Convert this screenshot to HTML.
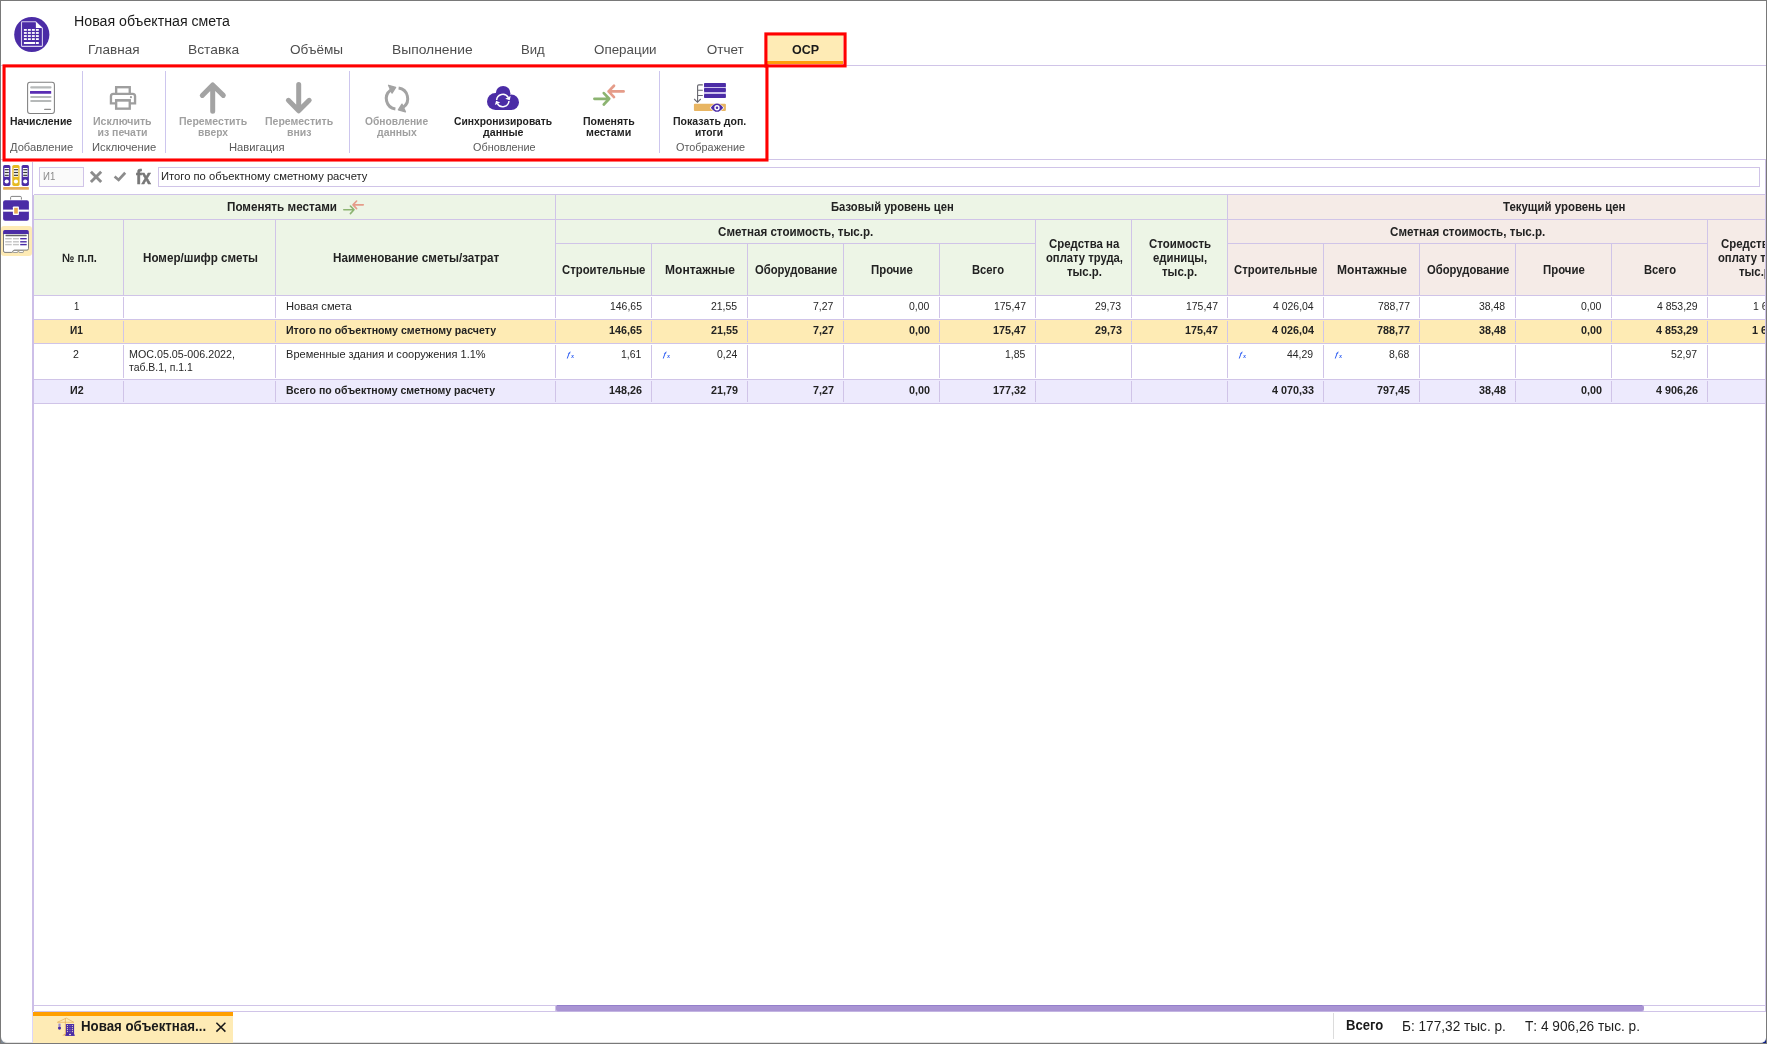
<!DOCTYPE html><html lang="ru"><head><meta charset="utf-8"><title>Новая объектная смета</title><style>

html,body{margin:0;padding:0;}
body{width:1767px;height:1044px;position:relative;overflow:hidden;background:#fff;font-family:"Liberation Sans", sans-serif;}
.t{position:absolute;white-space:nowrap;transform-origin:0 0;}
.a{position:absolute;}
svg{position:absolute;overflow:visible;}

</style></head><body>
<div class="a" style="left:0px;top:0px;width:1767px;height:1044px;background:#797979;"></div>
<div class="a" style="left:1759px;top:1036px;width:7px;height:7px;background:#0b1f86;"></div>
<div class="a" style="left:1px;top:1036px;width:6px;height:7px;background:#7d8894;"></div>
<div class="a" style="left:1px;top:1px;width:1765px;height:1042px;background:#fff;border-radius:0 0 5px 6px;box-sizing:border-box;border-bottom:1px solid #e2e2e2;"></div>
<div class="a" style="left:1px;top:65px;width:1765px;height:1px;background:#d0c4e8;"></div>
<div class="a" style="left:1px;top:159px;width:1765px;height:1px;background:#d0c4e8;"></div>
<div class="a" style="left:32px;top:162px;width:1px;height:850px;background:#cdbfe8;"></div>
<div class="a" style="left:33px;top:195px;width:1px;height:816px;background:#cdbfe8;"></div>
<div class="a" style="left:32px;top:1012px;width:1px;height:30px;background:#dcd6fb;"></div>
<div class="a" style="left:1765px;top:160px;width:1px;height:852px;background:#d0c4e8;"></div>
<div class="a" style="left:34px;top:195px;width:1193px;height:100px;background:#edf5e6;"></div>
<div class="a" style="left:1228px;top:195px;width:537px;height:100px;background:#f5ebe7;"></div>
<div class="a" style="left:34px;top:320px;width:1731px;height:23px;background:#feebb4;"></div>
<div class="a" style="left:34px;top:380px;width:1731px;height:23px;background:#edeafd;"></div>
<div class="a" style="left:34px;top:194px;width:1731px;height:1px;background:#d0c4e8;"></div>
<div class="a" style="left:34px;top:295px;width:1731px;height:1px;background:#d0c4e8;"></div>
<div class="a" style="left:34px;top:319px;width:1731px;height:1px;background:#d0c4e8;"></div>
<div class="a" style="left:34px;top:343px;width:1731px;height:1px;background:#d0c4e8;"></div>
<div class="a" style="left:34px;top:379px;width:1731px;height:1px;background:#d0c4e8;"></div>
<div class="a" style="left:34px;top:403px;width:1731px;height:1px;background:#d0c4e8;"></div>
<div class="a" style="left:34px;top:219px;width:1731px;height:1px;background:#d0c4e8;"></div>
<div class="a" style="left:555px;top:243px;width:480px;height:1px;background:#d0c4e8;"></div>
<div class="a" style="left:1227px;top:243px;width:480px;height:1px;background:#d0c4e8;"></div>
<div class="a" style="left:123px;top:219px;width:1px;height:76px;background:#d0c4e8;"></div>
<div class="a" style="left:275px;top:219px;width:1px;height:76px;background:#d0c4e8;"></div>
<div class="a" style="left:555px;top:194px;width:1px;height:101px;background:#d0c4e8;"></div>
<div class="a" style="left:1227px;top:194px;width:1px;height:101px;background:#d0c4e8;"></div>
<div class="a" style="left:651px;top:243px;width:1px;height:52px;background:#d0c4e8;"></div>
<div class="a" style="left:747px;top:243px;width:1px;height:52px;background:#d0c4e8;"></div>
<div class="a" style="left:843px;top:243px;width:1px;height:52px;background:#d0c4e8;"></div>
<div class="a" style="left:939px;top:243px;width:1px;height:52px;background:#d0c4e8;"></div>
<div class="a" style="left:1323px;top:243px;width:1px;height:52px;background:#d0c4e8;"></div>
<div class="a" style="left:1419px;top:243px;width:1px;height:52px;background:#d0c4e8;"></div>
<div class="a" style="left:1515px;top:243px;width:1px;height:52px;background:#d0c4e8;"></div>
<div class="a" style="left:1611px;top:243px;width:1px;height:52px;background:#d0c4e8;"></div>
<div class="a" style="left:1035px;top:219px;width:1px;height:76px;background:#d0c4e8;"></div>
<div class="a" style="left:1131px;top:219px;width:1px;height:76px;background:#d0c4e8;"></div>
<div class="a" style="left:1707px;top:219px;width:1px;height:76px;background:#d0c4e8;"></div>
<div class="a" style="left:123px;top:297px;width:1px;height:21px;background:#d0c4e8;"></div>
<div class="a" style="left:275px;top:297px;width:1px;height:21px;background:#d0c4e8;"></div>
<div class="a" style="left:555px;top:297px;width:1px;height:21px;background:#d0c4e8;"></div>
<div class="a" style="left:651px;top:297px;width:1px;height:21px;background:#d0c4e8;"></div>
<div class="a" style="left:747px;top:297px;width:1px;height:21px;background:#d0c4e8;"></div>
<div class="a" style="left:843px;top:297px;width:1px;height:21px;background:#d0c4e8;"></div>
<div class="a" style="left:939px;top:297px;width:1px;height:21px;background:#d0c4e8;"></div>
<div class="a" style="left:1035px;top:297px;width:1px;height:21px;background:#d0c4e8;"></div>
<div class="a" style="left:1131px;top:297px;width:1px;height:21px;background:#d0c4e8;"></div>
<div class="a" style="left:1227px;top:297px;width:1px;height:21px;background:#d0c4e8;"></div>
<div class="a" style="left:1323px;top:297px;width:1px;height:21px;background:#d0c4e8;"></div>
<div class="a" style="left:1419px;top:297px;width:1px;height:21px;background:#d0c4e8;"></div>
<div class="a" style="left:1515px;top:297px;width:1px;height:21px;background:#d0c4e8;"></div>
<div class="a" style="left:1611px;top:297px;width:1px;height:21px;background:#d0c4e8;"></div>
<div class="a" style="left:1707px;top:297px;width:1px;height:21px;background:#d0c4e8;"></div>
<div class="a" style="left:123px;top:321px;width:1px;height:21px;background:#d0c4e8;"></div>
<div class="a" style="left:275px;top:321px;width:1px;height:21px;background:#d0c4e8;"></div>
<div class="a" style="left:555px;top:321px;width:1px;height:21px;background:#d0c4e8;"></div>
<div class="a" style="left:651px;top:321px;width:1px;height:21px;background:#d0c4e8;"></div>
<div class="a" style="left:747px;top:321px;width:1px;height:21px;background:#d0c4e8;"></div>
<div class="a" style="left:843px;top:321px;width:1px;height:21px;background:#d0c4e8;"></div>
<div class="a" style="left:939px;top:321px;width:1px;height:21px;background:#d0c4e8;"></div>
<div class="a" style="left:1035px;top:321px;width:1px;height:21px;background:#d0c4e8;"></div>
<div class="a" style="left:1131px;top:321px;width:1px;height:21px;background:#d0c4e8;"></div>
<div class="a" style="left:1227px;top:321px;width:1px;height:21px;background:#d0c4e8;"></div>
<div class="a" style="left:1323px;top:321px;width:1px;height:21px;background:#d0c4e8;"></div>
<div class="a" style="left:1419px;top:321px;width:1px;height:21px;background:#d0c4e8;"></div>
<div class="a" style="left:1515px;top:321px;width:1px;height:21px;background:#d0c4e8;"></div>
<div class="a" style="left:1611px;top:321px;width:1px;height:21px;background:#d0c4e8;"></div>
<div class="a" style="left:1707px;top:321px;width:1px;height:21px;background:#d0c4e8;"></div>
<div class="a" style="left:123px;top:345px;width:1px;height:33px;background:#d0c4e8;"></div>
<div class="a" style="left:275px;top:345px;width:1px;height:33px;background:#d0c4e8;"></div>
<div class="a" style="left:555px;top:345px;width:1px;height:33px;background:#d0c4e8;"></div>
<div class="a" style="left:651px;top:345px;width:1px;height:33px;background:#d0c4e8;"></div>
<div class="a" style="left:747px;top:345px;width:1px;height:33px;background:#d0c4e8;"></div>
<div class="a" style="left:843px;top:345px;width:1px;height:33px;background:#d0c4e8;"></div>
<div class="a" style="left:939px;top:345px;width:1px;height:33px;background:#d0c4e8;"></div>
<div class="a" style="left:1035px;top:345px;width:1px;height:33px;background:#d0c4e8;"></div>
<div class="a" style="left:1131px;top:345px;width:1px;height:33px;background:#d0c4e8;"></div>
<div class="a" style="left:1227px;top:345px;width:1px;height:33px;background:#d0c4e8;"></div>
<div class="a" style="left:1323px;top:345px;width:1px;height:33px;background:#d0c4e8;"></div>
<div class="a" style="left:1419px;top:345px;width:1px;height:33px;background:#d0c4e8;"></div>
<div class="a" style="left:1515px;top:345px;width:1px;height:33px;background:#d0c4e8;"></div>
<div class="a" style="left:1611px;top:345px;width:1px;height:33px;background:#d0c4e8;"></div>
<div class="a" style="left:1707px;top:345px;width:1px;height:33px;background:#d0c4e8;"></div>
<div class="a" style="left:123px;top:381px;width:1px;height:21px;background:#d0c4e8;"></div>
<div class="a" style="left:275px;top:381px;width:1px;height:21px;background:#d0c4e8;"></div>
<div class="a" style="left:555px;top:381px;width:1px;height:21px;background:#d0c4e8;"></div>
<div class="a" style="left:651px;top:381px;width:1px;height:21px;background:#d0c4e8;"></div>
<div class="a" style="left:747px;top:381px;width:1px;height:21px;background:#d0c4e8;"></div>
<div class="a" style="left:843px;top:381px;width:1px;height:21px;background:#d0c4e8;"></div>
<div class="a" style="left:939px;top:381px;width:1px;height:21px;background:#d0c4e8;"></div>
<div class="a" style="left:1035px;top:381px;width:1px;height:21px;background:#d0c4e8;"></div>
<div class="a" style="left:1131px;top:381px;width:1px;height:21px;background:#d0c4e8;"></div>
<div class="a" style="left:1227px;top:381px;width:1px;height:21px;background:#d0c4e8;"></div>
<div class="a" style="left:1323px;top:381px;width:1px;height:21px;background:#d0c4e8;"></div>
<div class="a" style="left:1419px;top:381px;width:1px;height:21px;background:#d0c4e8;"></div>
<div class="a" style="left:1515px;top:381px;width:1px;height:21px;background:#d0c4e8;"></div>
<div class="a" style="left:1611px;top:381px;width:1px;height:21px;background:#d0c4e8;"></div>
<div class="a" style="left:1707px;top:381px;width:1px;height:21px;background:#d0c4e8;"></div>
<div class="a" style="left:34px;top:1005px;width:1731px;height:1px;background:#d0c4e8;"></div>
<div class="a" style="left:34px;top:1011px;width:1731px;height:1px;background:#d0c4e8;"></div>
<div class="a" style="left:555px;top:1005px;width:1px;height:7px;background:#d0c4e8;"></div>
<div class="a" style="left:556px;top:1005px;width:1088px;height:7px;background:#c3b4e2;border-radius:2px 3px 3px 2px;"></div>
<div class="a" style="left:556px;top:1005px;width:1088px;height:6px;background:#a994d3;border-radius:2px 3px 3px 2px;"></div>
<div class="a" style="left:557px;top:1005px;width:1085px;height:1px;background:#947fcb;"></div>
<div class="a" style="left:33px;top:1012px;width:200px;height:31px;background:#feebb5;"></div>
<div class="a" style="left:33px;top:1012px;width:200px;height:4px;background:#ff9f00;"></div>
<div class="a" style="left:1333px;top:1013px;width:1px;height:26px;background:#dcdcdc;"></div>
<div class="a" style="left:39px;top:167px;width:45px;height:20px;background:#fafafa;box-sizing:border-box;border:1px solid #d0c4e8;"></div>
<div class="a" style="left:158px;top:167px;width:1602px;height:20px;background:#fff;box-sizing:border-box;border:1px solid #d0c4e8;"></div>
<div class="a" style="left:767px;top:35px;width:76px;height:26px;background:#feebb5;"></div>
<div class="a" style="left:767px;top:61px;width:76px;height:3px;background:#ff9c0a;"></div>
<svg style="left:0;top:0" width="900" height="170" viewBox="0 0 900 170"><rect x="4.05" y="65.9" width="762.9" height="94.1" fill="none" stroke="#ff0000" stroke-width="3.1"/><rect x="765.9" y="33.95" width="79.15" height="31.95" fill="none" stroke="#ff0000" stroke-width="3.1"/></svg>
<div class="a" style="left:82px;top:71px;width:1px;height:82px;background:#cdc6ee;"></div>
<div class="a" style="left:165px;top:71px;width:1px;height:82px;background:#cdc6ee;"></div>
<div class="a" style="left:349px;top:71px;width:1px;height:82px;background:#cdc6ee;"></div>
<div class="a" style="left:659px;top:71px;width:1px;height:82px;background:#cdc6ee;"></div>
<div class="a" style="left:1px;top:226px;width:31px;height:30px;background:#feebb5;border-radius:3px;"></div>
<svg style="left:10px;top:14px" width="44" height="42" viewBox="10 14 44 42"><circle cx="31.8" cy="34.5" r="17.6" fill="#4b2ca6"/><path d="M22.3 21.7 H35.6 L42.4 28.3 V45.6 Q42.4 46.4 41.6 46.4 H22.3 Q21.5 46.4 21.5 45.6 V22.5 Q21.5 21.7 22.3 21.7 Z" fill="#4b2ca6" stroke="#d9d0f0" stroke-width="1.1"/><path d="M35.9 21.9 V27.9 H42.2 Z" fill="#fff"/><rect x="23.90" y="29.00" width="2.9" height="1.8" fill="#fff"/><rect x="27.90" y="29.00" width="2.9" height="1.8" fill="#fff"/><rect x="31.90" y="29.00" width="2.9" height="1.8" fill="#fff"/><rect x="35.90" y="29.00" width="2.9" height="1.8" fill="#fff"/><rect x="23.90" y="32.07" width="2.9" height="1.8" fill="#fff"/><rect x="27.90" y="32.07" width="2.9" height="1.8" fill="#fff"/><rect x="31.90" y="32.07" width="2.9" height="1.8" fill="#fff"/><rect x="35.90" y="32.07" width="2.9" height="1.8" fill="#fff"/><rect x="23.90" y="35.14" width="2.9" height="1.8" fill="#fff"/><rect x="27.90" y="35.14" width="2.9" height="1.8" fill="#fff"/><rect x="31.90" y="35.14" width="2.9" height="1.8" fill="#fff"/><rect x="35.90" y="35.14" width="2.9" height="1.8" fill="#fff"/><rect x="23.90" y="38.21" width="2.9" height="1.8" fill="#fff"/><rect x="27.90" y="38.21" width="2.9" height="1.8" fill="#fff"/><rect x="31.90" y="38.21" width="2.9" height="1.8" fill="#fff"/><rect x="35.90" y="38.21" width="2.9" height="1.8" fill="#fff"/><rect x="23.9" y="42" width="11.2" height="2" fill="#fff"/><rect x="35.9" y="42" width="2.9" height="2" fill="#fff"/></svg>
<svg style="left:26px;top:81px" width="31" height="34" viewBox="26 81 31 34"><rect x="27.6" y="82.3" width="26.8" height="31.2" rx="2.4" fill="#fff" stroke="#808080" stroke-width="1.05"/><rect x="30.2" y="86.3" width="21.3" height="2.1" rx="1" fill="#b6b9b9"/><rect x="30.0" y="90.95" width="21.2" height="2.9" rx="0.4" fill="#5a2db3"/><rect x="30.2" y="96.0" width="21.3" height="2.1" rx="1" fill="#b6b9b9"/><rect x="30.2" y="100.0" width="21.3" height="2.1" rx="1" fill="#b6b9b9"/><rect x="44.1" y="108.65" width="6.9" height="1.35" rx="0.5" fill="#8c8c8c"/></svg>
<svg style="left:108px;top:84px" width="30" height="28" viewBox="108 84 30 28"><rect x="116.15" y="87.2" width="13.6" height="7" fill="none" stroke="#9e9e9e" stroke-width="2.35"/><path d="M110.95 103.3 V96.3 Q110.95 93.85 113.4 93.85 H132.6 Q135.05 93.85 135.05 96.3 V103.3 Z" fill="#fff" stroke="#9e9e9e" stroke-width="2.35"/><rect x="116.15" y="100.5" width="13.6" height="8.15" fill="#fff" stroke="#9e9e9e" stroke-width="2.35"/><rect x="114.97" y="99.1" width="15.96" height="1.6" fill="#9e9e9e"/><circle cx="130.95" cy="97.15" r="1.1" fill="#9e9e9e"/></svg>
<svg style="left:198px;top:80px" width="30" height="36" viewBox="198 80 30 36"><path d="M212.7 111.3 V85.4 M202.3 95.4 L212.7 85 L223.3 95.4" fill="none" stroke="#a3a3a3" stroke-width="5" stroke-linecap="round" stroke-linejoin="round"/></svg>
<svg style="left:284px;top:80px" width="30" height="36" viewBox="284 80 30 36"><path d="M298.7 84.5 V110.4 M288.4 100.3 L298.7 110.8 L309.2 100.3" fill="none" stroke="#a3a3a3" stroke-width="5" stroke-linecap="round" stroke-linejoin="round"/></svg>
<svg style="left:383px;top:83px" width="28" height="32" viewBox="383 83 28 32"><path d="M395.4 109.1 A10.6 10.6 0 0 1 390.6 90.1" fill="none" stroke="#a3a3a3" stroke-width="3.0"/><path d="M388.6 85.3 L395.6 87.4 L392.0 93.0 Z" fill="#a3a3a3" stroke="#a3a3a3" stroke-width="1.4" stroke-linejoin="round"/><path d="M398.6 88.1 A10.6 10.6 0 0 1 403.4 107.1" fill="none" stroke="#a3a3a3" stroke-width="3.0"/><path d="M405.4 111.9 L398.4 109.8 L402.0 104.2 Z" fill="#a3a3a3" stroke="#a3a3a3" stroke-width="1.4" stroke-linejoin="round"/></svg>
<svg style="left:485px;top:84px" width="36" height="28" viewBox="485 84 36 28"><circle cx="495.5" cy="101.5" r="8.5" fill="#4b2ca6"/><circle cx="503.1" cy="93.2" r="7.3" fill="#4b2ca6"/><circle cx="511.2" cy="102.2" r="7.8" fill="#4b2ca6"/><rect x="495.5" y="98" width="15.7" height="12" fill="#4b2ca6"/><path d="M496.62 100.0 A6.2 6.2 0 0 1 508.2 97.4" fill="none" stroke="#fff" stroke-width="1.5"/><path d="M505.3 98.7 L510.7 96.0 L509.7 100.3 Z" fill="#fff"/><path d="M508.98 101.04 A6.2 6.2 0 0 1 497.4 103.6" fill="none" stroke="#fff" stroke-width="1.5"/><path d="M500.2 102.5 L494.9 104.9 L496.1 100.8 Z" fill="#fff"/></svg>
<svg style="left:590px;top:82px" width="38" height="26" viewBox="590 82 38 26"><path d="M594.4 98.8 H609.2 M603.80 93.10 L609.20 98.8 L603.80 104.50" fill="none" stroke="#8cb471" stroke-width="2.7" stroke-linecap="round" stroke-linejoin="round"/><path d="M623.6 91.4 H608.6 M614.00 85.70 L608.60 91.4 L614.00 97.10" fill="none" stroke="#e59c89" stroke-width="2.7" stroke-linecap="round" stroke-linejoin="round"/></svg>
<svg style="left:342px;top:199px" width="24" height="17" viewBox="342 199 24 17"><path d="M343.8 209.8 H354.0 M350.40 206.00 L354.00 209.8 L350.40 213.60" fill="none" stroke="#8cb471" stroke-width="1.6" stroke-linecap="round" stroke-linejoin="round"/><path d="M363.3 204.85 H353.0 M356.60 201.05 L353.00 204.85 L356.60 208.65" fill="none" stroke="#e59c89" stroke-width="1.6" stroke-linecap="round" stroke-linejoin="round"/></svg>
<svg style="left:692px;top:82px" width="36" height="32" viewBox="692 82 36 32"><rect x="704" y="83" width="21.9" height="15" rx="0.9" fill="#cdc2ec"/><rect x="704" y="83" width="21.9" height="4.1" rx="0.9" fill="#4b2ca6"/><rect x="704" y="88.05" width="21.9" height="3.9" rx="0.9" fill="#4b2ca6"/><rect x="704" y="93.9" width="21.9" height="4.1" rx="0.9" fill="#4b2ca6"/><rect x="693.9" y="103.8" width="32" height="7.2" rx="1" fill="#e8b562"/><path d="M702.8 84.9 H698.8 Q697.6 84.9 697.6 86.1 V102 M697.6 90.2 H702.8 M697.6 95.5 H702.8 M694.2 99.0 L697.5 102.3 L700.7 99.0" fill="none" stroke="#66666e" stroke-width="1.1"/><path d="M709.8 107.7 Q717 98.6 724.2 107.7 Q717 116.8 709.8 107.7 Z" fill="#fff"/><path d="M710.8 107.7 Q717 99.4 723.2 107.7 Q717 116 710.8 107.7 Z" fill="#4b2ca6"/><circle cx="717" cy="107.7" r="2.7" fill="#fff"/><circle cx="717" cy="107.7" r="1.25" fill="#4b2ca6"/></svg>
<svg style="left:88px;top:168px" width="40" height="18" viewBox="88 168 40 18"><path d="M90.9 171.8 L101.2 182.0 M101.2 171.8 L90.9 182.0" fill="none" stroke="#8c8c8c" stroke-width="2.9"/><path d="M114.6 176.55 L118.6 179.95 L125.2 172.75" fill="none" stroke="#8c8c8c" stroke-width="2.7"/></svg>
<svg style="left:2px;top:164px" width="28" height="27" viewBox="2 164 28 27"><rect x="3.1" y="164.9" width="7.3" height="21" rx="1.6" fill="#4b2ca6"/><rect x="4.4" y="168" width="4.7" height="8.8" fill="#fff"/><rect x="4.7" y="169.1" width="4.1" height="1.2" fill="#3a3a3a"/><rect x="4.7" y="171.9" width="4.1" height="1.2" fill="#3a3a3a"/><rect x="4.7" y="174.7" width="4.1" height="1.2" fill="#3a3a3a"/><circle cx="6.75" cy="181.5" r="2.1" fill="#fff"/><rect x="12.3" y="164.9" width="7.3" height="21" rx="1.6" fill="#e6ba22"/><rect x="13.600000000000001" y="168" width="4.7" height="8.8" fill="#fff"/><rect x="13.9" y="169.1" width="4.1" height="1.2" fill="#3a3a3a"/><rect x="13.9" y="171.9" width="4.1" height="1.2" fill="#3a3a3a"/><rect x="13.9" y="174.7" width="4.1" height="1.2" fill="#3a3a3a"/><circle cx="15.950000000000001" cy="181.5" r="2.1" fill="#fff"/><rect x="21.6" y="164.9" width="7.3" height="21" rx="1.6" fill="#4b2ca6"/><rect x="22.900000000000002" y="168" width="4.7" height="8.8" fill="#fff"/><rect x="23.200000000000003" y="169.1" width="4.1" height="1.2" fill="#3a3a3a"/><rect x="23.200000000000003" y="171.9" width="4.1" height="1.2" fill="#3a3a3a"/><rect x="23.200000000000003" y="174.7" width="4.1" height="1.2" fill="#3a3a3a"/><circle cx="25.25" cy="181.5" r="2.1" fill="#fff"/><rect x="3.1" y="187" width="25.8" height="2.8" rx="0.6" fill="#e6ae58"/></svg>
<svg style="left:2px;top:195px" width="28" height="27" viewBox="2 195 28 27"><path d="M10.6 199.6 V197.6 Q10.6 196.4 11.8 196.4 H20.2 Q21.4 196.4 21.4 197.6 V199.6" fill="none" stroke="#7c7c7c" stroke-width="0.95"/><rect x="3.1" y="200.2" width="25.8" height="20.6" rx="2" fill="#4b2ca6"/><rect x="3.1" y="209.6" width="25.8" height="2.1" fill="#fff"/><rect x="12.9" y="206.4" width="6" height="8.6" rx="0.8" fill="#fff"/><rect x="14.2" y="207.8" width="3.6" height="5.8" fill="#e8aa50"/></svg>
<svg style="left:2px;top:229px" width="28" height="25" viewBox="2 229 28 25"><path d="M3.5 233.6 V250.9 Q3.5 252.4 5 252.4 H11.8 Q12.6 252.4 12.9 251.5 Q13.2 250.1 14.5 250.1 H27 Q28.5 250.1 28.5 248.6 V233.6 Z" fill="#fff" stroke="#6e6e6e" stroke-width="0.9"/><rect x="13" y="250.5" width="4.9" height="2" rx="0.6" fill="#fff" stroke="#7a7a7a" stroke-width="0.7"/><rect x="18.9" y="250.5" width="4.5" height="2" rx="0.6" fill="#fff" stroke="#7a7a7a" stroke-width="0.7"/><path d="M3.1 233.9 V231.7 Q3.1 230.1 4.7 230.1 H27.2 Q28.8 230.1 28.8 231.7 V233.9 Z" fill="#4b2ca6"/><rect x="5.5" y="234.85" width="21.2" height="1.3" rx="0.5" fill="#666"/><rect x="5.2" y="238.0" width="6.5" height="1.4" fill="#c4c4c4"/><rect x="13" y="238.0" width="5.9" height="1.4" fill="#c4c4c4"/><rect x="20.2" y="238.0" width="6.5" height="1.4" fill="#4b2ca6"/><rect x="5.2" y="241.1" width="6.5" height="1.4" fill="#c4c4c4"/><rect x="13" y="241.1" width="5.9" height="1.4" fill="#c4c4c4"/><rect x="20.2" y="241.1" width="6.5" height="1.4" fill="#4b2ca6"/><rect x="5.2" y="243.9" width="6.5" height="1.4" fill="#c4c4c4"/><rect x="13" y="243.9" width="5.9" height="1.4" fill="#c4c4c4"/><rect x="20.2" y="243.9" width="6.5" height="1.4" fill="#4b2ca6"/></svg>
<svg style="left:56px;top:1016px" width="22" height="22" viewBox="56 1016 22 22"><path d="M65.4 1035.6 V1018.4 M57.2 1022.3 H74 M57.6 1022.2 L66.3 1018.1 L73.6 1022.2" fill="none" stroke="#e6b05a" stroke-width="0.9" stroke-opacity="0.8"/><path d="M62.2 1035.4 L65.2 1033.4 V1035.4 Z" fill="#e6b05a"/><rect x="65.9" y="1023.9" width="8.2" height="11.8" rx="0.5" fill="#4b2ca6"/><rect x="65.1" y="1034.5" width="9.8" height="1.3" rx="0.5" fill="#4b2ca6"/><circle cx="67.5" cy="1025.50" r="0.62" fill="#f3e2c2" opacity="1"/><circle cx="70" cy="1025.50" r="0.62" fill="#f3e2c2" opacity="0.45"/><circle cx="72.4" cy="1025.50" r="0.62" fill="#f3e2c2" opacity="1"/><circle cx="67.5" cy="1027.53" r="0.62" fill="#f3e2c2" opacity="1"/><circle cx="70" cy="1027.53" r="0.62" fill="#f3e2c2" opacity="0.45"/><circle cx="72.4" cy="1027.53" r="0.62" fill="#f3e2c2" opacity="1"/><circle cx="67.5" cy="1029.56" r="0.62" fill="#f3e2c2" opacity="1"/><circle cx="70" cy="1029.56" r="0.62" fill="#f3e2c2" opacity="0.45"/><circle cx="72.4" cy="1029.56" r="0.62" fill="#f3e2c2" opacity="1"/><circle cx="67.5" cy="1031.59" r="0.62" fill="#f3e2c2" opacity="1"/><circle cx="70" cy="1031.59" r="0.62" fill="#f3e2c2" opacity="0.45"/><circle cx="72.4" cy="1031.59" r="0.62" fill="#f3e2c2" opacity="1"/><ellipse cx="70" cy="1034.6" rx="1" ry="0.75" fill="#fdf3c8"/><path d="M59.5 1023.6 V1026.6" stroke="#9d8ccf" stroke-width="2.2"/><circle cx="59.5" cy="1028.1" r="1.55" fill="#4b2ca6"/></svg>
<svg style="left:214px;top:1020px" width="14" height="14" viewBox="214 1020 14 14"><path d="M216.4 1022.8 L225.4 1031.6 M225.4 1022.8 L216.4 1031.6" stroke="#1a1a1a" stroke-width="1.5" fill="none"/></svg>
<div class="a" style="left:0;top:0;width:1765px;height:1044px;overflow:hidden;will-change:transform">
<span class="t" style="left:74.30px;top:14.00px;font-size:14px;line-height:14px;color:#1a1a1a;transform:scaleX(1.0131);">Новая объектная смета</span>
<span class="t" style="left:88.30px;top:43.00px;font-size:13.5px;line-height:13.5px;color:#4d4d4d;transform:scaleX(1.0021);">Главная</span>
<span class="t" style="left:188.30px;top:43.00px;font-size:13.5px;line-height:13.5px;color:#4d4d4d;transform:scaleX(1.0222);">Вставка</span>
<span class="t" style="left:289.70px;top:43.00px;font-size:13.5px;line-height:13.5px;color:#4d4d4d;transform:scaleX(1.0072);">Объёмы</span>
<span class="t" style="left:391.50px;top:43.00px;font-size:13.5px;line-height:13.5px;color:#4d4d4d;transform:scaleX(1.0257);">Выполнение</span>
<span class="t" style="left:520.60px;top:43.00px;font-size:13.5px;line-height:13.5px;color:#4d4d4d;transform:scaleX(0.9739);">Вид</span>
<span class="t" style="left:594.30px;top:43.00px;font-size:13.5px;line-height:13.5px;color:#4d4d4d;transform:scaleX(0.9912);">Операции</span>
<span class="t" style="left:706.80px;top:43.00px;font-size:13.5px;line-height:13.5px;color:#4d4d4d;">Отчет</span>
<span class="t" style="left:791.70px;top:43.00px;font-size:13px;line-height:13px;color:#1a1a1a;font-weight:bold;transform:scaleX(0.9620);">ОСР</span>
<span class="t" style="left:9.70px;top:116.00px;font-size:10.5px;line-height:10.5px;color:#222222;font-weight:bold;transform:scaleX(0.9926);">Начисление</span>
<span class="t" style="left:9.70px;top:142.00px;font-size:11px;line-height:11px;color:#5a5a5a;transform:scaleX(1.0124);">Добавление</span>
<span class="t" style="left:93.20px;top:116.00px;font-size:10.5px;line-height:10.5px;color:#a0a0a0;font-weight:bold;transform:scaleX(1.0076);">Исключить</span>
<span class="t" style="left:97.50px;top:127.00px;font-size:10.5px;line-height:10.5px;color:#a0a0a0;font-weight:bold;">из печати</span>
<span class="t" style="left:91.70px;top:142.00px;font-size:11px;line-height:11px;color:#5a5a5a;transform:scaleX(1.0196);">Исключение</span>
<span class="t" style="left:178.80px;top:116.00px;font-size:10.5px;line-height:10.5px;color:#a0a0a0;font-weight:bold;transform:scaleX(1.0027);">Переместить</span>
<span class="t" style="left:198.00px;top:127.00px;font-size:10.5px;line-height:10.5px;color:#a0a0a0;font-weight:bold;transform:scaleX(0.9761);">вверх</span>
<span class="t" style="left:264.80px;top:116.00px;font-size:10.5px;line-height:10.5px;color:#a0a0a0;font-weight:bold;transform:scaleX(1.0027);">Переместить</span>
<span class="t" style="left:287.00px;top:127.00px;font-size:10.5px;line-height:10.5px;color:#a0a0a0;font-weight:bold;">вниз</span>
<span class="t" style="left:229.20px;top:142.00px;font-size:11px;line-height:11px;color:#5a5a5a;transform:scaleX(1.0213);">Навигация</span>
<span class="t" style="left:365.40px;top:116.00px;font-size:10.5px;line-height:10.5px;color:#a0a0a0;font-weight:bold;transform:scaleX(0.9748);">Обновление</span>
<span class="t" style="left:377.00px;top:127.00px;font-size:10.5px;line-height:10.5px;color:#a0a0a0;font-weight:bold;transform:scaleX(0.9950);">данных</span>
<span class="t" style="left:453.80px;top:116.00px;font-size:10.5px;line-height:10.5px;color:#222222;font-weight:bold;transform:scaleX(0.9809);">Синхронизировать</span>
<span class="t" style="left:482.80px;top:127.00px;font-size:10.5px;line-height:10.5px;color:#222222;font-weight:bold;transform:scaleX(1.0125);">данные</span>
<span class="t" style="left:472.60px;top:142.00px;font-size:11px;line-height:11px;color:#5a5a5a;transform:scaleX(0.9856);">Обновление</span>
<span class="t" style="left:583.00px;top:116.00px;font-size:10.5px;line-height:10.5px;color:#222222;font-weight:bold;transform:scaleX(1.0039);">Поменять</span>
<span class="t" style="left:586.40px;top:127.00px;font-size:10.5px;line-height:10.5px;color:#222222;font-weight:bold;transform:scaleX(1.0154);">местами</span>
<span class="t" style="left:672.70px;top:116.00px;font-size:10.5px;line-height:10.5px;color:#222222;font-weight:bold;transform:scaleX(1.0045);">Показать доп.</span>
<span class="t" style="left:695.00px;top:127.00px;font-size:10.5px;line-height:10.5px;color:#222222;font-weight:bold;transform:scaleX(0.9755);">итоги</span>
<span class="t" style="left:675.80px;top:142.00px;font-size:11px;line-height:11px;color:#5a5a5a;transform:scaleX(0.9880);">Отображение</span>
<span class="t" style="left:42.60px;top:171.00px;font-size:11px;line-height:11px;color:#8a8a8a;transform:scaleX(0.8766);">И1</span>
<span class="t" style="left:136.30px;top:167.00px;font-size:20px;line-height:20px;color:#777777;font-weight:bold;-webkit-text-stroke:0.6px #777777;transform:scaleX(0.8428);">fx</span>
<span class="t" style="left:161.40px;top:171.00px;font-size:11px;line-height:11px;color:#222222;transform:scaleX(1.0192);">Итого по объектному сметному расчету</span>
<span class="t" style="left:226.50px;top:201.00px;font-size:12px;line-height:12px;color:#222222;font-weight:bold;transform:scaleX(0.9729);">Поменять местами</span>
<span class="t" style="left:830.70px;top:201.00px;font-size:12px;line-height:12px;color:#222222;font-weight:bold;transform:scaleX(0.9366);">Базовый уровень цен</span>
<span class="t" style="left:1503.00px;top:201.00px;font-size:12px;line-height:12px;color:#222222;font-weight:bold;transform:scaleX(0.9524);">Текущий уровень цен</span>
<span class="t" style="left:61.50px;top:252.00px;font-size:12px;line-height:12px;color:#222222;font-weight:bold;transform:scaleX(0.9215);">№ п.п.</span>
<span class="t" style="left:142.60px;top:252.00px;font-size:12px;line-height:12px;color:#222222;font-weight:bold;transform:scaleX(0.9680);">Номер/шифр сметы</span>
<span class="t" style="left:332.80px;top:252.00px;font-size:12px;line-height:12px;color:#222222;font-weight:bold;transform:scaleX(0.9717);">Наименование сметы/затрат</span>
<span class="t" style="left:718.30px;top:226.00px;font-size:12px;line-height:12px;color:#222222;font-weight:bold;transform:scaleX(0.9671);">Сметная стоимость, тыс.р.</span>
<span class="t" style="left:562.40px;top:264.00px;font-size:12px;line-height:12px;color:#222222;font-weight:bold;transform:scaleX(0.9444);">Строительные</span>
<span class="t" style="left:665.10px;top:264.00px;font-size:12px;line-height:12px;color:#222222;font-weight:bold;">Монтажные</span>
<span class="t" style="left:754.90px;top:264.00px;font-size:12px;line-height:12px;color:#222222;font-weight:bold;transform:scaleX(0.9377);">Оборудование</span>
<span class="t" style="left:871.40px;top:264.00px;font-size:12px;line-height:12px;color:#222222;font-weight:bold;transform:scaleX(0.9497);">Прочие</span>
<span class="t" style="left:972.30px;top:264.00px;font-size:12px;line-height:12px;color:#222222;font-weight:bold;transform:scaleX(0.9360);">Всего</span>
<span class="t" style="left:1048.90px;top:238.00px;font-size:12px;line-height:12px;color:#222222;font-weight:bold;transform:scaleX(0.9522);">Средства на</span>
<span class="t" style="left:1045.50px;top:252.00px;font-size:12px;line-height:12px;color:#222222;font-weight:bold;transform:scaleX(0.9378);">оплату труда,</span>
<span class="t" style="left:1066.50px;top:266.00px;font-size:12px;line-height:12px;color:#222222;font-weight:bold;transform:scaleX(0.9512);">тыс.р.</span>
<span class="t" style="left:1390.30px;top:226.00px;font-size:12px;line-height:12px;color:#222222;font-weight:bold;transform:scaleX(0.9671);">Сметная стоимость, тыс.р.</span>
<span class="t" style="left:1234.40px;top:264.00px;font-size:12px;line-height:12px;color:#222222;font-weight:bold;transform:scaleX(0.9444);">Строительные</span>
<span class="t" style="left:1337.10px;top:264.00px;font-size:12px;line-height:12px;color:#222222;font-weight:bold;">Монтажные</span>
<span class="t" style="left:1426.90px;top:264.00px;font-size:12px;line-height:12px;color:#222222;font-weight:bold;transform:scaleX(0.9377);">Оборудование</span>
<span class="t" style="left:1543.40px;top:264.00px;font-size:12px;line-height:12px;color:#222222;font-weight:bold;transform:scaleX(0.9497);">Прочие</span>
<span class="t" style="left:1644.30px;top:264.00px;font-size:12px;line-height:12px;color:#222222;font-weight:bold;transform:scaleX(0.9360);">Всего</span>
<span class="t" style="left:1720.90px;top:238.00px;font-size:12px;line-height:12px;color:#222222;font-weight:bold;transform:scaleX(0.9522);">Средства на</span>
<span class="t" style="left:1717.50px;top:252.00px;font-size:12px;line-height:12px;color:#222222;font-weight:bold;transform:scaleX(0.9378);">оплату труда,</span>
<span class="t" style="left:1738.50px;top:266.00px;font-size:12px;line-height:12px;color:#222222;font-weight:bold;transform:scaleX(0.9512);">тыс.р.</span>
<span class="t" style="left:1148.80px;top:238.00px;font-size:12px;line-height:12px;color:#222222;font-weight:bold;transform:scaleX(0.9565);">Стоимость</span>
<span class="t" style="left:1152.80px;top:252.00px;font-size:12px;line-height:12px;color:#222222;font-weight:bold;transform:scaleX(0.9465);">единицы,</span>
<span class="t" style="left:1162.20px;top:266.00px;font-size:12px;line-height:12px;color:#222222;font-weight:bold;transform:scaleX(0.9539);">тыс.р.</span>
<span class="t" style="left:73.50px;top:301.00px;font-size:11px;line-height:11px;color:#222;transform:scaleX(0.8653);">1</span>
<span class="t" style="left:69.60px;top:325.00px;font-size:11px;line-height:11px;color:#222;font-weight:bold;transform:scaleX(0.9194);">И1</span>
<span class="t" style="left:73.30px;top:349.00px;font-size:11px;line-height:11px;color:#222;transform:scaleX(0.9633);">2</span>
<span class="t" style="left:69.60px;top:385.00px;font-size:11px;line-height:11px;color:#222;font-weight:bold;transform:scaleX(0.9693);">И2</span>
<span class="t" style="left:129.20px;top:349.00px;font-size:11px;line-height:11px;color:#262626;transform:scaleX(0.9737);">МОС.05.05-006.2022,</span>
<span class="t" style="left:129.20px;top:362.00px;font-size:11px;line-height:11px;color:#262626;transform:scaleX(0.9476);">таб.В.1, п.1.1</span>
<span class="t" style="left:286.10px;top:301.00px;font-size:11px;line-height:11px;color:#262626;transform:scaleX(1.0129);">Новая смета</span>
<span class="t" style="left:286.10px;top:325.00px;font-size:11px;line-height:11px;color:#222;font-weight:bold;transform:scaleX(0.9633);">Итого по объектному сметному расчету</span>
<span class="t" style="left:286.10px;top:349.00px;font-size:11px;line-height:11px;color:#262626;">Временные здания и сооружения 1.1%</span>
<span class="t" style="left:286.10px;top:385.00px;font-size:11px;line-height:11px;color:#222;font-weight:bold;transform:scaleX(0.9569);">Всего по объектному сметному расчету</span>
<span class="t" style="left:609.63px;top:301.00px;font-size:11px;line-height:11px;color:#262626;transform:scaleX(0.9500);">146,65</span>
<span class="t" style="left:711.45px;top:301.00px;font-size:11px;line-height:11px;color:#262626;transform:scaleX(0.9500);">21,55</span>
<span class="t" style="left:813.25px;top:301.00px;font-size:11px;line-height:11px;color:#262626;transform:scaleX(0.9500);">7,27</span>
<span class="t" style="left:909.25px;top:301.00px;font-size:11px;line-height:11px;color:#262626;transform:scaleX(0.9500);">0,00</span>
<span class="t" style="left:993.63px;top:301.00px;font-size:11px;line-height:11px;color:#262626;transform:scaleX(0.9500);">175,47</span>
<span class="t" style="left:1095.45px;top:301.00px;font-size:11px;line-height:11px;color:#262626;transform:scaleX(0.9500);">29,73</span>
<span class="t" style="left:1185.63px;top:301.00px;font-size:11px;line-height:11px;color:#262626;transform:scaleX(0.9500);">175,47</span>
<span class="t" style="left:1272.91px;top:301.00px;font-size:11px;line-height:11px;color:#262626;transform:scaleX(0.9500);">4 026,04</span>
<span class="t" style="left:1377.63px;top:301.00px;font-size:11px;line-height:11px;color:#262626;transform:scaleX(0.9500);">788,77</span>
<span class="t" style="left:1479.45px;top:301.00px;font-size:11px;line-height:11px;color:#262626;transform:scaleX(0.9500);">38,48</span>
<span class="t" style="left:1581.25px;top:301.00px;font-size:11px;line-height:11px;color:#262626;transform:scaleX(0.9500);">0,00</span>
<span class="t" style="left:1656.91px;top:301.00px;font-size:11px;line-height:11px;color:#262626;transform:scaleX(0.9500);">4 853,29</span>
<span class="t" style="left:1752.91px;top:301.00px;font-size:11px;line-height:11px;color:#262626;transform:scaleX(0.9500);">1 614,40</span>
<span class="t" style="left:608.92px;top:325.00px;font-size:11px;line-height:11px;color:#222222;font-weight:bold;transform:scaleX(0.9800);">146,65</span>
<span class="t" style="left:710.92px;top:325.00px;font-size:11px;line-height:11px;color:#222222;font-weight:bold;transform:scaleX(0.9800);">21,55</span>
<span class="t" style="left:812.91px;top:325.00px;font-size:11px;line-height:11px;color:#222222;font-weight:bold;transform:scaleX(0.9800);">7,27</span>
<span class="t" style="left:908.91px;top:325.00px;font-size:11px;line-height:11px;color:#222222;font-weight:bold;transform:scaleX(0.9800);">0,00</span>
<span class="t" style="left:992.92px;top:325.00px;font-size:11px;line-height:11px;color:#222222;font-weight:bold;transform:scaleX(0.9800);">175,47</span>
<span class="t" style="left:1094.92px;top:325.00px;font-size:11px;line-height:11px;color:#222222;font-weight:bold;transform:scaleX(0.9800);">29,73</span>
<span class="t" style="left:1184.92px;top:325.00px;font-size:11px;line-height:11px;color:#222222;font-weight:bold;transform:scaleX(0.9800);">175,47</span>
<span class="t" style="left:1271.93px;top:325.00px;font-size:11px;line-height:11px;color:#222222;font-weight:bold;transform:scaleX(0.9800);">4 026,04</span>
<span class="t" style="left:1376.92px;top:325.00px;font-size:11px;line-height:11px;color:#222222;font-weight:bold;transform:scaleX(0.9800);">788,77</span>
<span class="t" style="left:1478.92px;top:325.00px;font-size:11px;line-height:11px;color:#222222;font-weight:bold;transform:scaleX(0.9800);">38,48</span>
<span class="t" style="left:1580.91px;top:325.00px;font-size:11px;line-height:11px;color:#222222;font-weight:bold;transform:scaleX(0.9800);">0,00</span>
<span class="t" style="left:1655.93px;top:325.00px;font-size:11px;line-height:11px;color:#222222;font-weight:bold;transform:scaleX(0.9800);">4 853,29</span>
<span class="t" style="left:1751.93px;top:325.00px;font-size:11px;line-height:11px;color:#222222;font-weight:bold;transform:scaleX(0.9800);">1 614,40</span>
<span class="t" style="left:621.25px;top:349.00px;font-size:11px;line-height:11px;color:#262626;transform:scaleX(0.9500);">1,61</span>
<span class="t" style="left:717.25px;top:349.00px;font-size:11px;line-height:11px;color:#262626;transform:scaleX(0.9500);">0,24</span>
<span class="t" style="left:1005.25px;top:349.00px;font-size:11px;line-height:11px;color:#262626;transform:scaleX(0.9500);">1,85</span>
<span class="t" style="left:1287.45px;top:349.00px;font-size:11px;line-height:11px;color:#262626;transform:scaleX(0.9500);">44,29</span>
<span class="t" style="left:1389.25px;top:349.00px;font-size:11px;line-height:11px;color:#262626;transform:scaleX(0.9500);">8,68</span>
<span class="t" style="left:1671.45px;top:349.00px;font-size:11px;line-height:11px;color:#262626;transform:scaleX(0.9500);">52,97</span>
<span class="t" style="left:608.92px;top:385.00px;font-size:11px;line-height:11px;color:#222222;font-weight:bold;transform:scaleX(0.9800);">148,26</span>
<span class="t" style="left:710.92px;top:385.00px;font-size:11px;line-height:11px;color:#222222;font-weight:bold;transform:scaleX(0.9800);">21,79</span>
<span class="t" style="left:812.91px;top:385.00px;font-size:11px;line-height:11px;color:#222222;font-weight:bold;transform:scaleX(0.9800);">7,27</span>
<span class="t" style="left:908.91px;top:385.00px;font-size:11px;line-height:11px;color:#222222;font-weight:bold;transform:scaleX(0.9800);">0,00</span>
<span class="t" style="left:992.92px;top:385.00px;font-size:11px;line-height:11px;color:#222222;font-weight:bold;transform:scaleX(0.9800);">177,32</span>
<span class="t" style="left:1271.93px;top:385.00px;font-size:11px;line-height:11px;color:#222222;font-weight:bold;transform:scaleX(0.9800);">4 070,33</span>
<span class="t" style="left:1376.92px;top:385.00px;font-size:11px;line-height:11px;color:#222222;font-weight:bold;transform:scaleX(0.9800);">797,45</span>
<span class="t" style="left:1478.92px;top:385.00px;font-size:11px;line-height:11px;color:#222222;font-weight:bold;transform:scaleX(0.9800);">38,48</span>
<span class="t" style="left:1580.91px;top:385.00px;font-size:11px;line-height:11px;color:#222222;font-weight:bold;transform:scaleX(0.9800);">0,00</span>
<span class="t" style="left:1655.93px;top:385.00px;font-size:11px;line-height:11px;color:#222222;font-weight:bold;transform:scaleX(0.9800);">4 906,26</span>
<span class="t" style="left:81.20px;top:1019.00px;font-size:14px;line-height:14px;color:#1a1a1a;font-weight:bold;transform:scaleX(0.9485);">Новая объектная...</span>
<span class="t" style="left:1346.00px;top:1018.00px;font-size:14px;line-height:14px;color:#1a1a1a;font-weight:bold;transform:scaleX(0.9325);">Всего</span>
<span class="t" style="left:1401.70px;top:1019.00px;font-size:14.5px;line-height:14.5px;color:#1e1e1e;transform:scaleX(0.9409);">Б: 177,32 тыс. р.</span>
<span class="t" style="left:1524.60px;top:1019.00px;font-size:14.5px;line-height:14.5px;color:#1e1e1e;transform:scaleX(0.9437);">Т: 4 906,26 тыс. р.</span>
<span class="t" style="left:568.40px;top:351.00px;font-size:7.5px;line-height:7.5px;color:#2b5cf2;font-weight:bold;font-style:italic;font-family:'Liberation Serif',serif;transform:skewX(-10deg);">f</span>
<span class="t" style="left:571.10px;top:353.00px;font-size:6.5px;line-height:6.5px;color:#2b5cf2;font-weight:bold;font-style:italic;font-family:'Liberation Serif',serif;transform:scaleX(0.9538);">x</span>
<span class="t" style="left:664.40px;top:351.00px;font-size:7.5px;line-height:7.5px;color:#2b5cf2;font-weight:bold;font-style:italic;font-family:'Liberation Serif',serif;transform:skewX(-10deg);">f</span>
<span class="t" style="left:667.10px;top:353.00px;font-size:6.5px;line-height:6.5px;color:#2b5cf2;font-weight:bold;font-style:italic;font-family:'Liberation Serif',serif;transform:scaleX(0.9538);">x</span>
<span class="t" style="left:1240.40px;top:351.00px;font-size:7.5px;line-height:7.5px;color:#2b5cf2;font-weight:bold;font-style:italic;font-family:'Liberation Serif',serif;transform:skewX(-10deg);">f</span>
<span class="t" style="left:1243.10px;top:353.00px;font-size:6.5px;line-height:6.5px;color:#2b5cf2;font-weight:bold;font-style:italic;font-family:'Liberation Serif',serif;transform:scaleX(0.9538);">x</span>
<span class="t" style="left:1336.40px;top:351.00px;font-size:7.5px;line-height:7.5px;color:#2b5cf2;font-weight:bold;font-style:italic;font-family:'Liberation Serif',serif;transform:skewX(-10deg);">f</span>
<span class="t" style="left:1339.10px;top:353.00px;font-size:6.5px;line-height:6.5px;color:#2b5cf2;font-weight:bold;font-style:italic;font-family:'Liberation Serif',serif;transform:scaleX(0.9538);">x</span>
</div>

</body></html>
